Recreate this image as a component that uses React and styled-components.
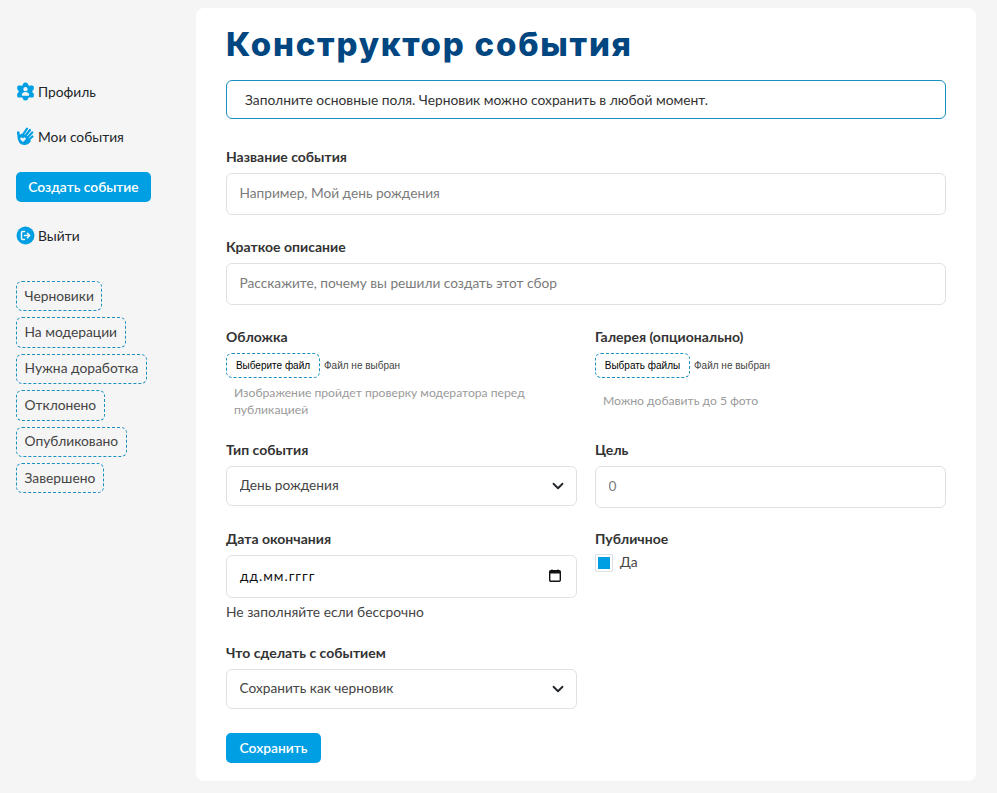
import React from "react";
import styled, { createGlobalStyle } from "styled-components";

const bodyFont = `"Lato", "Noto Sans", sans-serif`;

const Global = createGlobalStyle`
  html, body { margin: 0; padding: 0; background: #f5f5f5; }
  body { font-family: ${bodyFont}; color: #333; }
  * { box-sizing: border-box; }
`;

const Page = styled.div`
  display: flex;
  align-items: flex-start;
  width: 997px;
  height: 793px;
  padding: 8px 21px 12px 0;
  overflow: hidden;
`;

const Sidebar = styled.aside`
  width: 196px;
  flex: none;
  padding: 73px 0 0 16px;
  display: flex;
  flex-direction: column;
  align-items: flex-start;
`;

const NavLink = styled.a`
  display: flex;
  align-items: center;
  gap: 3px;
  height: 22px;
  padding-bottom: 2px;
  font-size: 13.8px;
  color: #212529;
  margin-bottom: ${(p) => p.$mb || 0}px;
  svg { width: 19px; height: 19px; flex: none; }
`;

const CreateButton = styled.button`
  height: 30px;
  width: 135px;
  border: 0;
  border-radius: 5px;
  background: #009fe3;
  color: #fff;
  font: 600 13.8px ${bodyFont};
  padding: 0 0 2px;
  margin-bottom: 23px;
`;

const Chips = styled.div`
  display: flex;
  flex-direction: column;
  align-items: flex-start;
  gap: 6px;
  margin-top: 34px;
`;

const Chip = styled.div`
  height: 30.4px;
  padding: 0 7.5px 2px;
  display: flex;
  align-items: center;
  border: 1px dashed #1b8fc0;
  border-radius: 6px;
  font-size: 13.8px;
  color: #444;
`;

const Card = styled.main`
  width: 780px;
  height: 773px;
  background: #fff;
  border-radius: 8px;
  padding: 15px 30px 0;
`;

const Title = styled.h1`
  margin: 0 0 15px;
  height: 42px;
  font: 800 33px/42px "Inter", sans-serif;
  letter-spacing: 1.75px;
  color: #004680;
`;

const Notice = styled.div`
  height: 39px;
  border: 1px solid #1b8fc0;
  border-radius: 6px;
  padding: 0 18px;
  display: flex;
  align-items: center;
  font-size: 13.8px;
  color: #333;
  margin-bottom: 29px;
`;

const Field = styled.div`
  margin-bottom: ${(p) => p.$mb ?? 23}px;
`;

const Label = styled.label`
  display: block;
  font-size: 14px;
  font-weight: 700;
  line-height: 18px;
  color: #333;
  margin-bottom: 7px;
`;

const fieldBox = `
  width: 100%;
  border: 1px solid #dee2e6;
  border-radius: 6px;
  background: #fff;
  padding: 0 12.5px 3px;
  font: 13.7px ${bodyFont};
  color: #444;
`;

const TextInput = styled.input`
  ${fieldBox}
  display: block;
  height: 42px;
  &::placeholder { color: #7b7b7b; opacity: 1; }
`;

const Columns = styled.div`
  display: grid;
  grid-template-columns: 351px 351px;
  column-gap: 18px;
`;

const FileRow = styled.div`
  display: flex;
  align-items: center;
  gap: 4px;
`;

const FileButton = styled.button`
  height: 25px;
  padding: 0;
  width: ${(p) => p.$w}px;
  background: #fff;
  border: 1px dashed #1b8fc0;
  border-radius: 6px;
  font: 10px "Liberation Sans", sans-serif;
  color: #000;
`;

const FileName = styled.span`
  font: 10px "Liberation Sans", sans-serif;
  color: #444;
`;

const Hint = styled.p`
  margin: 0;
  padding: ${(p) => p.$pt}px 0 0 ${(p) => p.$pl}px;
  font-size: 12.15px;
  line-height: 17px;
  color: #9a9a9a;
`;

const SelectWrap = styled.div`
  position: relative;
  svg {
    position: absolute;
    right: 13px;
    top: 50%;
    transform: translateY(-50%);
    pointer-events: none;
  }
`;

const Select = styled.select`
  ${fieldBox}
  display: block;
  height: ${(p) => p.$h}px;
  appearance: none;
  outline: none;
`;

const DateBox = styled.div`
  ${fieldBox}
  height: 43px;
  display: flex;
  align-items: center;
  justify-content: space-between;
  color: #111;
  padding: 0 15px 2px 13px;
  letter-spacing: 1px;
`;

const Note = styled.p`
  margin: 5px 0 0;
  font-size: 13.8px;
  line-height: 18px;
  color: #444;
`;

const CheckRow = styled.label`
  display: flex;
  align-items: flex-start;
  gap: 8px;
  font-size: 13.8px;
  line-height: 18px;
  color: #444;
  margin-top: -2px;
`;

const CheckBox = styled.span`
  width: 16px;
  height: 16px;
  background: #009fe3;
  border: 2px solid #fff;
  outline: 1px solid #dee2e6;
  margin: 2px 0 0 1px;
`;

const SaveButton = styled.button`
  display: block;
  width: 95px;
  height: 30px;
  border: 0;
  border-radius: 5px;
  background: #009fe3;
  color: #fff;
  font: 600 13.8px ${bodyFont};
  padding: 0 0 2px;
`;

const Chevron = () => (
  <svg width="12" height="12" viewBox="0 0 16 16" fill="none" stroke="#212529" strokeWidth="2.4" strokeLinecap="round" strokeLinejoin="round">
    <path d="M2 5l6 6 6-6" />
  </svg>
);

const CalendarIcon = () => (
  <svg width="12" height="13" viewBox="0 0 12 13" fill="none">
    <path d="M3 0.5v2M9 0.5v2" stroke="#111" strokeWidth="1.3" />
    <rect x="0.7" y="1.7" width="10.6" height="10.6" rx="1.2" stroke="#111" strokeWidth="1.4" />
    <rect x="0.7" y="1.7" width="10.6" height="2.8" fill="#111" />
  </svg>
);

const ProfileIcon = () => (
  <svg viewBox="0 0 19 19">
    <g fill="#009fe3">
      <circle cx="9.5" cy="9.5" r="7" />
      <circle cx="9.5" cy="3.2" r="2.7" />
      <circle cx="9.5" cy="15.8" r="2.7" />
      <rect x="1.2" y="3.4" width="5" height="5" rx="1.6" />
      <rect x="12.8" y="3.4" width="5" height="5" rx="1.6" />
      <rect x="1.2" y="10.6" width="5" height="5" rx="1.6" />
      <rect x="12.8" y="10.6" width="5" height="5" rx="1.6" />
    </g>
    <circle cx="9.5" cy="7.2" r="2.1" fill="#f5f5f5" />
    <path fill="#f5f5f5" d="M5.8 13c0-1.900 1.700-3 3.700-3s3.700 1.100 3.700 3c0 .5-.4.800-.8.800H6.600c-.4 0-.8-.3-.8-.8z" />
  </svg>
);

const HandIcon = () => (
  <svg viewBox="0 0 19 19">
    <g stroke="#009fe3" strokeLinecap="round" fill="none">
      <path strokeWidth="2.6" d="M2.200 5.500l1 6.500" />
      <path strokeWidth="2.200" d="M6 9L11 1.700M8 10.500l6-7.500M10 12l6.300-6.500M12 13.500l4.500-4" />
    </g>
    <path fill="#009fe3" d="M1.800 10c0 5 2.500 8 6.500 8 3 0 5-1.500 6.700-4L11 9 6 6.500 3.500 8z" />
    <path fill="#f5f5f5" d="M7 15l-2.300-2.200c-.6-.6-.6-1.500-.1-2 .5-.5 1.400-.4 1.900.1l.5.5.5-.5c.5-.5 1.400-.6 1.900-.1.500.5.500 1.400-.1 2z" />
  </svg>
);

const ExitIcon = () => (
  <svg viewBox="0 0 19 19">
    <circle cx="9.5" cy="9.5" r="9" fill="#009fe3" />
    <path fill="none" stroke="#f5f5f5" strokeWidth="1.5" strokeLinecap="round" strokeLinejoin="round" d="M8.500 5.500H6.500a1 1 0 0 0-1 1v6a1 1 0 0 0 1 1h2" />
    <path fill="none" stroke="#f5f5f5" strokeWidth="1.5" strokeLinecap="round" strokeLinejoin="round" d="M8.500 9.500h5M11.500 7.300l2.200 2.200-2.200 2.200" />
  </svg>
);

const statuses = ["Черновики", "На модерации", "Нужна доработка", "Отклонено", "Опубликовано", "Завершено"];

export default function App() {
  return (
    <Page>
      <Global />
      <Sidebar>
        <NavLink $mb={23}><ProfileIcon />Профиль</NavLink>
        <NavLink $mb={24}><HandIcon />Мои события</NavLink>
        <CreateButton>Создать событие</CreateButton>
        <NavLink><ExitIcon />Выйти</NavLink>
        <Chips>
          {statuses.map((s) => <Chip key={s}>{s}</Chip>)}
        </Chips>
      </Sidebar>
      <Card>
        <Title>Конструктор события</Title>
        <Notice>Заполните основные поля. Черновик можно сохранить в любой момент.</Notice>
        <Field>
          <Label>Название события</Label>
          <TextInput placeholder="Например, Мой день рождения" />
        </Field>
        <Field>
          <Label>Краткое описание</Label>
          <TextInput placeholder="Расскажите, почему вы решили создать этот сбор" />
        </Field>
        <Columns>
          <Field>
            <Label>Обложка</Label>
            <FileRow><FileButton $w={94}>Выберите файл</FileButton><FileName>Файл не выбран</FileName></FileRow>
            <Hint $pt={6} $pl={8}>Изображение пройдет проверку модератора перед публикацией</Hint>
          </Field>
          <Field>
            <Label>Галерея (опционально)</Label>
            <FileRow><FileButton $w={95}>Выбрать файлы</FileButton><FileName>Файл не выбран</FileName></FileRow>
            <Hint $pt={14} $pl={8}>Можно добавить до 5 фото</Hint>
          </Field>
          <Field $mb={22}>
            <Label>Тип события</Label>
            <SelectWrap>
              <Select $h={40}><option>День рождения</option></Select>
              <Chevron />
            </SelectWrap>
          </Field>
          <Field $mb={22}>
            <Label>Цель</Label>
            <TextInput placeholder="0" />
          </Field>
          <Field>
            <Label>Дата окончания</Label>
            <DateBox>дд.мм.гггг<CalendarIcon /></DateBox>
            <Note>Не заполняйте если бессрочно</Note>
          </Field>
          <Field>
            <Label>Публичное</Label>
            <CheckRow><CheckBox />Да</CheckRow>
          </Field>
          <Field $mb={24}>
            <Label>Что сделать с событием</Label>
            <SelectWrap>
              <Select $h={40}><option>Сохранить как черновик</option></Select>
              <Chevron />
            </SelectWrap>
          </Field>
        </Columns>
        <SaveButton>Сохранить</SaveButton>
      </Card>
    </Page>
  );
}
